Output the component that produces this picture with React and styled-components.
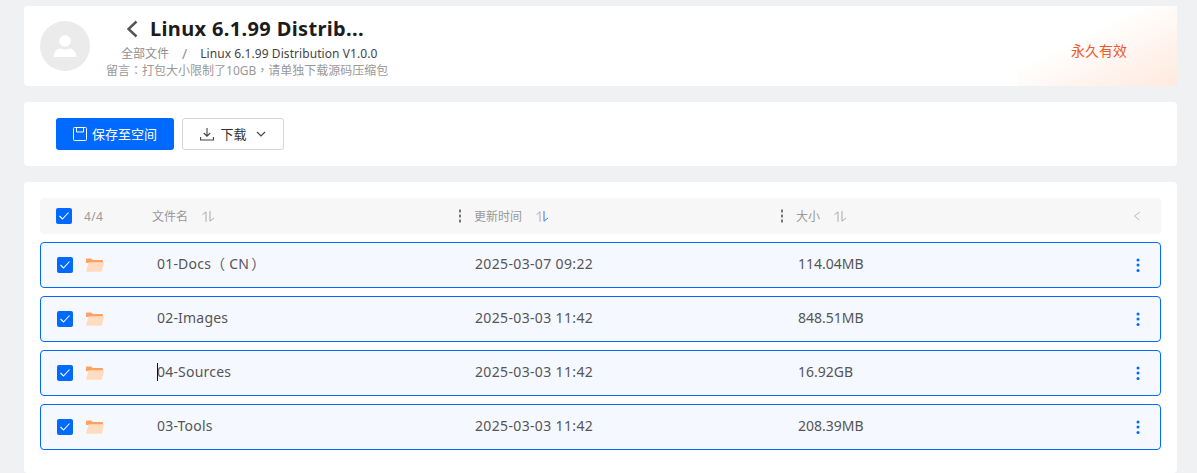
import React from "react";
import styled, { createGlobalStyle } from "styled-components";

const Global = createGlobalStyle`
  html, body { margin: 0; padding: 0; height: 473px; overflow: hidden; background: #f0f1f3; }
  body { font-family: "Noto Sans", "Noto Sans CJK SC", sans-serif; }
  * { box-sizing: border-box; }
`;

const Page = styled.div`
  height: 473px;
  overflow: hidden;
  padding: 6px 20px 0 24px;
  display: flex;
  flex-direction: column;
  gap: 16px;
`;

const HeaderCard = styled.header`
  height: 80px;
  flex: none;
  background: #fff;
  border-radius: 4px 0 0 4px;
  padding: 15px 16px 0;
  display: flex;
  position: relative;
  overflow: hidden;
  &::after {
    content: "";
    position: absolute;
    top: 0;
    right: 0;
    bottom: 0;
    width: 160px;
    background: linear-gradient(to bottom right, rgba(255,255,255,0) 38%, #ffe9dd 100%);
  }
`;

const Avatar = styled.div`
  width: 50px;
  height: 50px;
  border-radius: 50%;
  background: #ebebeb;
  display: flex;
  align-items: center;
  justify-content: center;
  flex: none;
`;

const HeaderInfo = styled.div`
  margin-left: 16px;
  margin-top: -6px;
  display: flex;
  flex-direction: column;
`;

const TitleRow = styled.div`
  display: flex;
  align-items: center;
  height: 28px;
  padding-left: 20px;
  gap: 11px;
`;

const Title = styled.h1`
  margin: 0;
  font-size: 20px;
  line-height: 28px;
  font-weight: 700;
  color: #1c1c1c;
  letter-spacing: 0.35px;
`;

const Crumbs = styled.div`
  display: flex;
  align-items: center;
  padding-left: 15px;
  height: 17px;
  margin-top: 2px;
  font-size: 12px;
  line-height: 17px;
  color: #444;
`;

const CrumbRoot = styled.span`
  color: #8f8f8f;
`;

const CrumbSep = styled.span`
  color: #8f8f8f;
  font-size: 14px;
  margin: 0 13px;
`;

const CrumbName = styled.span`
  letter-spacing: 0.07px;
`;

const Note = styled.div`
  font-size: 12px;
  line-height: 17px;
  color: #999;
  white-space: nowrap;
`;

const Punct = styled.span`
  font-family: "Noto Sans CJK TC", sans-serif;
  line-height: 0;
  margin: 0 ${(p) => p.$after || 0}px 0 ${(p) => p.$before || 0}px;
`;

const Expire = styled.div`
  position: absolute;
  z-index: 1;
  top: 35px;
  left: 1047px;
  font-size: 14px;
  line-height: 20px;
  color: #f0582a;
`;

const ToolbarCard = styled.section`
  height: 64px;
  flex: none;
  background: #fff;
  border-radius: 4px;
  padding: 16px 32px;
  display: flex;
  gap: 8px;
`;

const PrimaryButton = styled.button`
  width: 118px;
  height: 32px;
  border: 0;
  border-radius: 3px;
  background: #0069ff;
  color: #fff;
  font: inherit;
  font-size: 13px;
  display: flex;
  align-items: center;
  justify-content: center;
  gap: 5px;
  padding: 0;
`;

const GhostButton = styled.button`
  width: 102px;
  height: 32px;
  border: 1px solid #d6d6d6;
  border-radius: 3px;
  background: #fff;
  color: #333;
  font: inherit;
  font-size: 13px;
  display: flex;
  align-items: center;
  justify-content: center;
  gap: 6px;
  padding: 0;
`;

const ButtonLabel = styled.span`
  position: relative;
  top: -1px;
`;

const ListCard = styled.section`
  flex: 1;
  background: #fff;
  border-radius: 4px;
  padding: 16px 16px 0;
`;

const columns = "grid-template-columns: 44px 68px 322px 322px 1fr 40px;";

const HeadRow = styled.div`
  display: grid;
  ${columns}
  align-items: center;
  height: 36px;
  background: #f7f7f7;
  border-radius: 4px;
  font-size: 12px;
  color: #999;
`;

const HeadCount = styled.span`
  color: #999;
  font-size: 12px;
  letter-spacing: 0.3px;
`;

const HeadCell = styled.div`
  display: flex;
  align-items: center;
  position: relative;
  gap: 14px;
`;

const Grip = styled.span`
  position: absolute;
  left: ${(p) => p.$left}px;
  top: 50%;
  transform: translateY(-50%);
  display: flex;
  flex-direction: column;
  gap: 2px;
  & > i {
    width: 2px;
    height: 3px;
    background: #777;
    display: block;
  }
`;

const Rows = styled.div`
  display: flex;
  flex-direction: column;
  gap: 8px;
  margin-top: 8px;
`;

const Row = styled.div`
  display: grid;
  ${columns}
  align-items: center;
  height: 46px;
  border: 1px solid #0069ff;
  border-radius: 4px;
  background: #f5f8ff;
  font-size: 14px;
  line-height: 20px;
  color: #555;
`;

const CheckCell = styled.div`
  display: flex;
  padding-left: ${(p) => p.$pad}px;
`;

const Check = styled.span`
  width: 16px;
  height: 16px;
  border-radius: 2px;
  background: #0069ff;
  display: flex;
  align-items: center;
  justify-content: center;
`;

const FolderCell = styled.div`
  display: flex;
  padding-left: 1px;
`;

const TextCell = styled.div`
  position: relative;
  top: -1px;
  padding-left: ${(p) => p.$pad || 0}px;
  letter-spacing: ${(p) => p.$spacing || 0}px;
`;

const Caret = styled.span`
  position: absolute;
  left: 4px;
  top: 1px;
  width: 1px;
  height: 18px;
  background: #111;
`;

const EndCell = styled.div`
  display: flex;
  justify-content: center;
  padding-right: ${(p) => p.$right}px;
`;

const CheckMark = () => (
  <Check>
    <svg width="12" height="10" viewBox="0 0 12 10" fill="none">
      <path d="M1.5 5l3 3 6-6.5" stroke="#fff" strokeWidth="1.1" />
    </svg>
  </Check>
);

const Folder = () => (
  <svg width="18" height="14" viewBox="0 0 18 14">
    <path d="M0 1.5C0 .7.4.4 1 .4h4.2l1.6 1.7H16c.6 0 1 .3 1 .9V5H0z" fill="#ffa161" />
    <path d="M2.8 4.2h14.4c.6 0 .9.4.7 1L16 13c-.1.5-.5.8-1 .8H1c-.7 0-1-.4-.9-1z" fill="#ffdcc0" />
  </svg>
);

const SortIcon = ({ blue }) => (
  <svg width="13" height="11" viewBox="0 0 13 11" fill="none">
    <path d="M.6 3.600L4 .8v10" stroke="#aaa" strokeWidth="1" />
    <path d="M8 0v10.200l4-3.200" stroke={blue ? "#2f7df6" : "#aaa"} strokeWidth="1" />
  </svg>
);

const Dots = () => (
  <svg width="4" height="14" viewBox="0 0 4 14">
    <circle cx="2" cy="2" r="1.5" fill="#0069ff" />
    <circle cx="2" cy="7" r="1.5" fill="#0069ff" />
    <circle cx="2" cy="12.500" r="1.5" fill="#0069ff" />
  </svg>
);

const rows = [
  { name: <>01-Docs<Punct $after={4}>（</Punct>CN<Punct $before={2}>）</Punct></>, id: "docs", time: "2025-03-07 09:22", size: "114.04MB" },
  { name: "02-Images", id: "images", time: "2025-03-03 11:42", size: "848.51MB" },
  { name: "04-Sources", id: "sources", time: "2025-03-03 11:42", size: "16.92GB", caret: true },
  { name: "03-Tools", id: "tools", time: "2025-03-03 11:42", size: "208.39MB" },
];

export default function App() {
  return (
    <>
      <Global />
      <Page>
        <HeaderCard>
          <Avatar>
            <svg width="24" height="22" viewBox="0 0 24 22">
              <circle cx="12" cy="6" r="5.800" fill="#fff" />
              <path d="M.6 22c0-4.600 2.800-7.800 6.400-8.800 3 1.600 7 1.600 10 0 3.600 1 6.400 4.200 6.400 8.800z" fill="#fff" />
            </svg>
          </Avatar>
          <HeaderInfo>
            <TitleRow>
              <svg width="13" height="18" viewBox="0 0 13 18" fill="none">
                <path d="M10.500 1.500L2.500 9l8 7.500" stroke="#555" strokeWidth="2.400" />
              </svg>
              <Title>Linux 6.1.99 Distrib...</Title>
            </TitleRow>
            <Crumbs>
              <CrumbRoot>全部文件</CrumbRoot>
              <CrumbSep>/</CrumbSep>
              <CrumbName>Linux 6.1.99 Distribution V1.0.0</CrumbName>
            </Crumbs>
            <Note>留言<Punct>：</Punct>打包大小限制了10GB<Punct>，</Punct>请单独下载源码压缩包</Note>
          </HeaderInfo>
          <Expire>永久有效</Expire>
        </HeaderCard>

        <ToolbarCard>
          <PrimaryButton>
            <svg width="14" height="14" viewBox="0 0 14 14" fill="none" stroke="#fff" strokeWidth="1">
              <rect x="0.500" y="0.500" width="13" height="13" rx="1" />
              <path d="M3.500 1v4h7V1" />
            </svg>
            <ButtonLabel>保存至空间</ButtonLabel>
          </PrimaryButton>
          <GhostButton>
            <svg width="14" height="14" viewBox="0 0 14 14" fill="none" stroke="#444" strokeWidth="1.100">
              <path d="M7 1v8M3.800 6L7 9.200 10.200 6M.6 10v3h12.800v-3" />
            </svg>
            <ButtonLabel>下载</ButtonLabel>
            <svg width="10" height="6" viewBox="0 0 10 6" fill="none" stroke="#444" strokeWidth="1.100" style={{ marginLeft: 3 }}>
              <path d="M1 1l4 4 4-4" />
            </svg>
          </GhostButton>
        </ToolbarCard>

        <ListCard>
          <HeadRow>
            <CheckCell $pad={16}><CheckMark /></CheckCell>
            <HeadCount>4/4</HeadCount>
            <HeadCell>文件名<SortIcon /></HeadCell>
            <HeadCell><Grip $left={-15}><i /><i /><i /></Grip>更新时间<SortIcon blue /></HeadCell>
            <HeadCell><Grip $left={-15}><i /><i /><i /></Grip>大小<SortIcon /></HeadCell>
            <EndCell $right={9}>
              <svg width="8" height="10" viewBox="0 0 8 10" fill="none" stroke="#bbb" strokeWidth="1">
                <path d="M7 1L1.500 5 6.500 9" />
              </svg>
            </EndCell>
          </HeadRow>
          <Rows>
            {rows.map((r) => (
              <Row key={r.id}>
                <CheckCell $pad={16}><CheckMark /></CheckCell>
                <FolderCell><Folder /></FolderCell>
                <TextCell $pad={4} $spacing={0.2}>
                  {r.caret && <Caret />}
                  {r.name}
                </TextCell>
                <TextCell $spacing={0.35}>{r.time}</TextCell>
                <TextCell $pad={1}>{r.size}</TextCell>
                <EndCell $right={5}><Dots /></EndCell>
              </Row>
            ))}
          </Rows>
        </ListCard>
      </Page>
    </>
  );
}
